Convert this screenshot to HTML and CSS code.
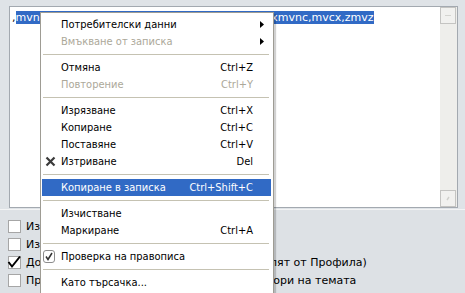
FILE: index.html
```html
<!DOCTYPE html>
<html lang="bg">
<head>
<meta charset="utf-8">
<title>Контекстно меню</title>
<link rel="stylesheet" href="styles.css">
</head>
<body>
<div class="top">
  <div class="editor">
    <div class="text">,<span class="sel">mvnc,xmvcn,zmcvx,cmvnz,xmcvn,mzvnx,cvn,xmvnc,mvcx,zmvz</span></div>
    <div class="scroll">
      <div class="sbtn"><svg width="14" height="15" viewBox="0 0 14 15"><path d="M4 7.5h6" stroke="#d4d4d0" stroke-width="1"/></svg></div>
      <div class="sbtn"><svg width="14" height="15" viewBox="0 0 14 15"><path d="M6 9l2-3" stroke="#d0d0cc" stroke-width="1.4"/></svg></div>
    </div>
  </div>
</div>
<div class="panel">
  <div class="row"><span class="box"></span><span>Изключване на емотиконите</span></div>
  <div class="row"><span class="box"></span><span>Изключване на BBC кодовете</span></div>
  <div class="row"><span class="box checked"><svg class="tick" width="15" height="14" viewBox="0 0 15 14"><path d="M1.5 7l3.5 4.5L13 1.5" fill="none" stroke="#000" stroke-width="2"/></svg></span><span>Добавяне на подписа (опциите се определят от Профила)</span></div>
  <div class="row"><span class="box"></span><span>Прати известие по имейла при нови отговори на темата</span></div>
</div>

<div class="menu">
  <div class="item">Потребителски данни<svg class="arrow" width="4" height="7" viewBox="0 0 4 7"><path d="M0 0L4 3.5L0 7z" fill="#000"/></svg></div>
  <div class="item dis">Вмъкване от записка<svg class="arrow" width="4" height="7" viewBox="0 0 4 7"><path d="M0 0L4 3.5L0 7z" fill="#000"/></svg></div>
  <div class="sep"></div>
  <div class="item"><span class="lbl">Отмяна</span><span class="key">Ctrl+Z</span></div>
  <div class="item dis"><span class="lbl">Повторение</span><span class="key">Ctrl+Y</span></div>
  <div class="sep"></div>
  <div class="item"><span class="lbl">Изрязване</span><span class="key">Ctrl+X</span></div>
  <div class="item"><span class="lbl">Копиране</span><span class="key">Ctrl+C</span></div>
  <div class="item"><span class="lbl">Поставяне</span><span class="key">Ctrl+V</span></div>
  <div class="item"><svg class="icon" width="11" height="11" viewBox="0 0 11 11"><path d="M1.5 1.5L9.5 9.5M9.5 1.5L1.5 9.5" stroke="#3a3a3a" stroke-width="2.2"/></svg><span class="lbl">Изтриване</span><span class="key">Del</span></div>
  <div class="sep"></div>
  <div class="item hl"><span class="lbl">Копиране в записка</span><span class="key">Ctrl+Shift+C</span></div>
  <div class="sep"></div>
  <div class="item"><span class="lbl">Изчистване</span></div>
  <div class="item"><span class="lbl">Маркиране</span><span class="key">Ctrl+A</span></div>
  <div class="sep"></div>
  <div class="item"><svg class="icon chk" width="12" height="13" viewBox="0 0 12 13"><rect x="0.5" y="0.5" width="11" height="12" rx="2.5" fill="#fff" stroke="#8c8c8c"/><path d="M3 6.5l2 3L9 3" fill="none" stroke="#333" stroke-width="1.5"/></svg><span class="lbl">Проверка на правописа</span></div>
  <div class="sep"></div>
  <div class="item"><span class="lbl">Като търсачка...</span></div>
</div>
</body>
</html>
```
FILE: styles.css
```css
html, body {
  margin: 0;
  padding: 0;
}
body {
  width: 465px;
  height: 293px;
  overflow: hidden;
  position: relative;
  background: #dfe3e7;
  font-family: "DejaVu Sans", sans-serif;
  font-size: 11px;
  color: #000;
}
.top {
  padding: 6px 7px 0 9px;
}
.editor {
  display: flex;
  height: 202px;
  box-sizing: border-box;
  border: 1px solid #a3a9b0;
  background: #fff;
}
.text {
  flex: 1;
  min-width: 0;
  overflow: hidden;
  white-space: nowrap;
  padding: 4px 2px;
  line-height: 13px;
}
.sel {
  background: #316ac5;
  color: #fff;
}
.scroll {
  width: 17px;
  background: #eeeeeb;
  display: flex;
  flex-direction: column;
  justify-content: space-between;
}
.sbtn {
  width: 16px;
  height: 17px;
  box-sizing: border-box;
  border: 1px solid #c4c4c2;
  background: #f1f1ef;
  display: flex;
}
.panel {
  margin-top: 1px;
  border-top: 1px solid #f3f4f5;
  background: #dde1e5;
  padding: 7px 0 0 8px;
  height: 100px;
}
.row {
  display: flex;
  align-items: center;
  gap: 5px;
  height: 18px;
  white-space: nowrap;
}
.box {
  position: relative;
  width: 13px;
  height: 13px;
  box-sizing: border-box;
  border: 1px solid #a6a6a6;
  background: #fff;
  flex: none;
}
.tick {
  position: absolute;
  left: -2px;
  top: -2px;
}
.menu {
  position: absolute;
  left: 40px;
  top: 12px;
  width: 234px;
  box-sizing: border-box;
  background: #fff;
  border: 1px solid #9e9c94;
  padding: 3px 2px 3px 1px;
  box-shadow: 2px 2px 1px rgba(0, 0, 0, 0.18);
  font-family: "DejaVu Sans Condensed", "DejaVu Sans", sans-serif;
  font-stretch: condensed;
  font-size: 11px;
}
.item {
  position: relative;
  display: flex;
  align-items: center;
  justify-content: space-between;
  height: 17px;
  padding: 0 18px 0 19px;
  white-space: nowrap;
}
.item.dis {
  color: #aca899;
}
.item.hl {
  background: #316ac5;
  color: #fff;
}
.arrow {
  position: absolute;
  right: 7px;
  top: 5px;
}
.icon {
  position: absolute;
  left: 3px;
  top: 3px;
}
.icon.chk {
  left: 1px;
  top: 2px;
}
.sep {
  height: 9px;
  display: flex;
  align-items: center;
  padding: 0 2px 0 1px;
}
.sep::before {
  content: "";
  flex: 1;
  height: 1px;
  background: #c5c2b2;
}
```
